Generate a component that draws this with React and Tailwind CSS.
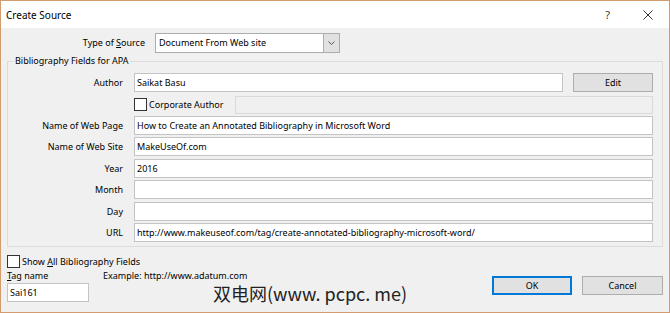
import React from "react";

const font = { fontFamily: '"Noto Sans", "Noto Sans CJK SC", sans-serif' };

function Field({ label, value, children }) {
  return (
    <div className="flex h-[19px] items-center">
      <div className="w-[116px] pr-[1px] text-right">{label}</div>
      <div className="ml-[10px] flex flex-1 items-center">
        {children ?? (
          <div className="flex h-[19px] flex-1 items-center border border-[#c4c4c4] bg-white pl-[2px] whitespace-nowrap">
            {value}
          </div>
        )}
      </div>
    </div>
  );
}

function Check({ label }) {
  return (
    <div className="flex items-center">
      <div className="h-[13px] w-[13px] shrink-0 border border-[#333] bg-white" />
      <div className="ml-[2px] whitespace-nowrap">{label}</div>
    </div>
  );
}

export default function App() {
  return (
    <div
      className="relative flex h-[313px] w-[670px] flex-col border border-[#d39c6e] bg-[#f0f0f0] text-[9px] leading-[12px] text-black"
      style={font}
    >
      <div className="flex h-[27px] shrink-0 items-center bg-white pl-[5px] pr-[16px]">
        <div className="text-[10px]">Create Source</div>
        <div className="flex-1" />
        <div className="mr-[33px] text-[11px] text-[#333]">?</div>
        <svg width="10" height="10" viewBox="0 0 10 10">
          <path d="M0.5 0.5 L9.5 9.5 M9.5 0.5 L0.5 9.5" stroke="#333" strokeWidth="1" />
        </svg>
      </div>

      <div className="flex items-center pt-[5px]">
        <div className="w-[144px] text-right">
          Type of <span className="underline">S</span>ource
        </div>
        <div className="ml-[10px] flex h-[20px] w-[185px] border border-[#adadad] bg-white">
          <div className="flex flex-1 items-center pl-[3px]">Document From Web site</div>
          <div className="flex w-[16px] items-center justify-center border-l border-[#adadad] bg-[#e1e1e1]">
            <svg width="7" height="4" viewBox="0 0 7 4">
              <path d="M0.5 0.5 L3.5 3.5 L6.5 0.5" stroke="#555" fill="none" strokeWidth="1" />
            </svg>
          </div>
        </div>
      </div>

      <div className="relative mx-[6px] mt-[8px] border border-[#dcdcdc] pb-[4px] pr-[9px] pt-[11px]">
        <div className="absolute left-[6px] top-[-7px] bg-[#f0f0f0] px-[1px]">Bibliography Fields for APA</div>
        <div className="flex flex-col">
          <Field label="Author">
            <div className="flex h-[19px] flex-1 items-center border border-[#c4c4c4] bg-white pl-[2px]">Saikat Basu</div>
            <div className="ml-[10px] flex h-[19px] w-[80px] items-center justify-center border border-[#adadad] bg-[#e1e1e1]">Edit</div>
          </Field>
          <div className="mt-[3px] flex h-[19px] items-center">
            <div className="ml-[126px] w-[101px]">
              <Check label="Corporate Author" />
            </div>
            <div className="h-[18px] flex-1 border border-[#d9d9d9] bg-[#f0f0f0]" />
          </div>
          <div className="mt-[2px]">
            <Field label="Name of Web Page" value="How to Create an Annotated Bibliography in Microsoft Word" />
          </div>
          <div className="mt-[2px]">
            <Field label="Name of Web Site" value="MakeUseOf.com" />
          </div>
          <div className="mt-[3px]">
            <Field label="Year" value="2016" />
          </div>
          <div className="mt-[2px]">
            <Field label="Month" value="" />
          </div>
          <div className="mt-[3px]">
            <Field label="Day" value="" />
          </div>
          <div className="mt-[2px]">
            <Field label="URL" value="http://www.makeuseof.com/tag/create-annotated-bibliography-microsoft-word/" />
          </div>
        </div>
      </div>

      <div className="ml-[6px] mt-[8px]">
        <Check
          label={
            <span>
              Show <span className="underline">A</span>ll Bibliography Fields
            </span>
          }
        />
      </div>

      <div className="mt-[2px] flex pl-[6px] pr-[6px]">
        <div className="flex w-[96px] flex-col">
          <div className="h-[13px]">
            <span className="underline">T</span>ag name
          </div>
          <div className="flex h-[19px] w-[82px] items-center border border-[#c4c4c4] bg-white pl-[2px]">Sai161</div>
        </div>
        <div className="h-[13px]">Example: http://www.adatum.com</div>
        <div className="flex-1" />
        <div className="mt-[6px] flex">
          <div className="flex h-[19px] w-[80px] items-center justify-center border-2 border-[#0078d7] bg-[#e1e1e1]">OK</div>
          <div className="ml-[10px] flex h-[19px] w-[81px] items-center justify-center border border-[#adadad] bg-[#e1e1e1]">Cancel</div>
        </div>
      </div>

      <div
        className="pointer-events-none absolute left-[212px] top-[281px] text-[18px] leading-[22px] text-[#222]"
        style={{ fontFamily: '"Noto Sans CJK SC", sans-serif' }}
      >
        双电网(www. pcpc. me)
      </div>
    </div>
  );
}
